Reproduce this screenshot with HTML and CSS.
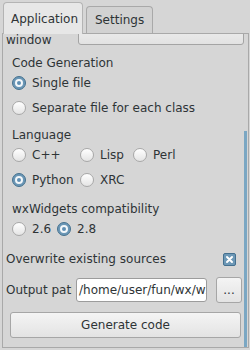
FILE: index.html
```html
<!DOCTYPE html>
<html lang="en">
<head>
  <meta charset="UTF-8">
  <meta name="viewport" content="width=device-width, initial-scale=1.0">
  <title>wxGlade - Application</title>
  <link rel="stylesheet" href="styles.css">
</head>
<body>

  <div class="tabs">
    <div class="tab active">Application</div>
    <div class="tab">Settings</div>
  </div>

  <div class="pane">
    <div class="content">

      <div class="top-row">
        <div class="top-label">Top<br>window</div>
        <div class="combo"></div>
      </div>

      <div class="group first">
        <div class="group-label">Code Generation</div>
        <div class="radio-row"><span class="radio on"></span>Single file</div>
        <div class="radio-row"><span class="radio"></span>Separate file for each class</div>
      </div>

      <div class="group lang">
        <div class="group-label">Language</div>
        <div class="radio-grid">
          <div class="radio-row"><span class="radio"></span>C++</div>
          <div class="radio-row"><span class="radio"></span>Lisp</div>
          <div class="radio-row"><span class="radio"></span>Perl</div>
          <div class="radio-row"><span class="radio on"></span>Python</div>
          <div class="radio-row"><span class="radio"></span>XRC</div>
        </div>
      </div>

      <div class="group compat">
        <div class="group-label">wxWidgets compatibility</div>
        <div class="radio-inline">
          <div class="radio-row"><span class="radio"></span>2.6</div>
          <div class="radio-row"><span class="radio on"></span>2.8</div>
        </div>
      </div>

      <div class="check-row">
        <span>Overwrite existing sources</span>
        <svg class="checkbox" width="13" height="13" viewBox="0 0 13 13">
          <rect x="0.5" y="0.5" width="12" height="12" rx="1.5" fill="#6d98b6" stroke="#44708f"/>
          <path d="M4 4 L9 9 M9 4 L4 9" stroke="#ffffff" stroke-width="2" stroke-linecap="round"/>
        </svg>
      </div>

      <div class="output-row">
        <div class="output-label">Output path:</div>
        <div class="text-input">/home/user/fun/wx/wxglade.py</div>
        <button class="btn small">...</button>
      </div>

      <button class="btn generate">Generate code</button>

    </div>
    <div class="scroll">
      <div class="thumb"></div>
    </div>
  </div>

</body>
</html>
```

FILE: styles.css
```css
    body {
      margin: 0;
      background-color: #d6d6d6;
      font-family: "DejaVu Sans", sans-serif;
      font-size: 12px;
      color: #2e3436;
      width: 250px;
      height: 350px;
      overflow: hidden;
    }

    .tabs {
      display: flex;
      align-items: flex-end;
      height: 33px;
      padding-left: 3px;
    }

    .tab {
      box-sizing: border-box;
      height: 27px;
      margin-left: 3px;
      padding: 6px 8px 0 8px;
      border: 1px solid #a9a9a9;
      border-bottom: none;
      border-radius: 4px 4px 0 0;
      background-color: #d2d2d2;
    }

    .tab.active {
      height: 32px;
      margin-left: 0;
      margin-bottom: -1px;
      padding: 9px 7px 0 7px;
      width: 80px;
      background-color: #e7e7e7;
      border-color: #b4b4b4;
      position: relative;
    }

    .pane {
      box-sizing: border-box;
      display: flex;
      margin-left: 2px;
      width: 247px;
      height: 315px;
      border: 1px solid #a9a9a9;
      overflow: hidden;
    }

    .content {
      flex: 1;
      display: flex;
      flex-direction: column;
      padding-left: 3px;
      padding-right: 0;
    }

    .top-row {
      display: flex;
      align-items: center;
      justify-content: space-between;
      margin-top: -15px;
      height: 28px;
    }

    .top-label {
      line-height: 14px;
    }

    .combo {
      box-sizing: border-box;
      width: 166px;
      height: 24px;
      border: 1px solid #a4a4a4;
      border-radius: 3px;
      background: linear-gradient(#f2f2f2, #e2e2e2);
    }

    .group {
      padding-left: 6px;
    }

    .group.first {
      margin-top: 9px;
    }

    .group.lang {
      margin-top: 8px;
    }

    .group.compat {
      margin-top: 10px;
    }

    .group-label {
      line-height: 14px;
      height: 14px;
    }

    .radio-row {
      display: flex;
      align-items: center;
      height: 25px;
      white-space: nowrap;
    }

    .radio-grid {
      display: grid;
      grid-template-columns: 68px 53px auto;
    }

    .radio-inline {
      display: flex;
      gap: 6px;
    }

    .radio {
      box-sizing: border-box;
      position: relative;
      width: 14px;
      height: 14px;
      margin-right: 6px;
      border: 1px solid #a8a8a8;
      border-radius: 50%;
      background: linear-gradient(#ffffff, #e4e4e4);
    }

    .radio.on {
      border-color: #46728f;
      background: #6b97b6;
    }

    .radio.on::after {
      content: "";
      position: absolute;
      left: 2px;
      top: 2px;
      width: 4px;
      height: 4px;
      border: 2px solid #f3f7fa;
      border-radius: 50%;
      background-color: #5f8fb3;
    }

    .check-row {
      display: flex;
      align-items: center;
      justify-content: space-between;
      margin-top: 5px;
      height: 26px;
      padding-right: 8px;
    }

    .checkbox {
      display: block;
    }

    .output-row {
      display: flex;
      align-items: center;
      margin-top: 5px;
      height: 26px;
    }

    .output-label {
      width: 66px;
      margin-right: 4px;
      overflow: hidden;
      white-space: nowrap;
    }

    .text-input {
      box-sizing: border-box;
      width: 131px;
      height: 24px;
      line-height: 22px;
      padding-left: 2px;
      border: 1px solid #9c9c9c;
      border-radius: 3px;
      background-color: #ffffff;
      overflow: hidden;
      white-space: nowrap;
    }

    .btn {
      box-sizing: border-box;
      height: 26px;
      border: 1px solid #a6a6a6;
      border-radius: 3px;
      background: linear-gradient(#f4f4f4, #e3e3e3);
      font-family: "DejaVu Sans", sans-serif;
      font-size: 12px;
      color: #2e3436;
      padding: 0;
    }

    .btn.small {
      width: 26px;
      margin-left: 9px;
    }

    .btn.generate {
      margin-top: 9px;
      margin-left: 4px;
      width: 231px;
    }

    .scroll {
      width: 4px;
    }

    .thumb {
      width: 3px;
      height: 216px;
      margin-top: 97px;
      background-color: #7ba7c3;
    }
```
